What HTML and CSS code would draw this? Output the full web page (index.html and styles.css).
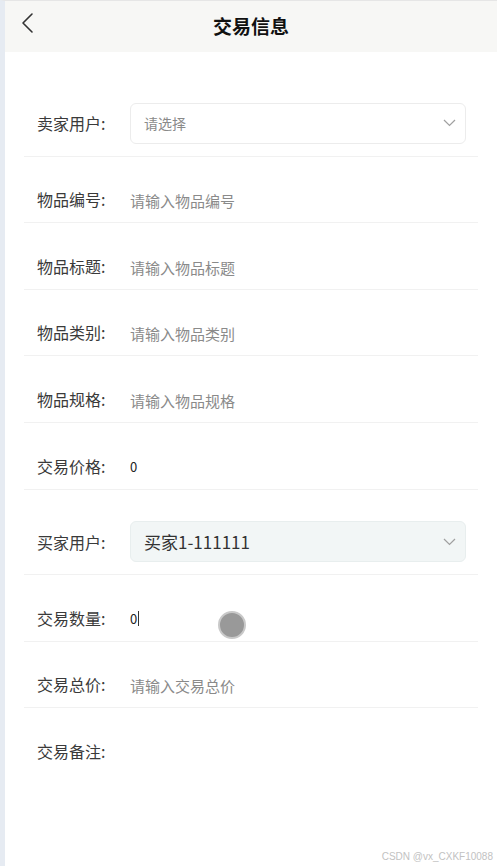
FILE: index.html
```html
<!DOCTYPE html>
<html lang="zh-CN">
<head>
    <meta charset="UTF-8">
    <meta name="viewport" content="width=device-width, initial-scale=1.0">
    <title>交易信息</title>
    <link rel="stylesheet" href="styles.css">
</head>
<body>
    <div class="page">
        <header class="nav-bar">
            <span class="nav-back">
                <svg width="14" height="22" viewBox="0 0 14 22">
                    <path d="M11 2 L2 11 L11 20" fill="none" stroke="#333" stroke-width="1.6" stroke-linecap="round" stroke-linejoin="round"/>
                </svg>
            </span>
            <h1 class="nav-title">交易信息</h1>
            <span class="nav-side"></span>
        </header>

        <form class="form">
            <div class="form-row">
                <label class="form-label">卖家用户:</label>
                <div class="picker">
                    <span class="picker-text placeholder">请选择</span>
                    <svg class="picker-arrow" width="13" height="8" viewBox="0 0 13 8">
                        <path d="M1 1 L6.5 6.5 L12 1" fill="none" stroke="#a0a0a0" stroke-width="1.2"/>
                    </svg>
                </div>
            </div>
            <div class="form-row">
                <label class="form-label">物品编号:</label>
                <span class="form-input placeholder">请输入物品编号</span>
            </div>
            <div class="form-row">
                <label class="form-label">物品标题:</label>
                <span class="form-input placeholder">请输入物品标题</span>
            </div>
            <div class="form-row">
                <label class="form-label">物品类别:</label>
                <span class="form-input placeholder">请输入物品类别</span>
            </div>
            <div class="form-row">
                <label class="form-label">物品规格:</label>
                <span class="form-input placeholder">请输入物品规格</span>
            </div>
            <div class="form-row">
                <label class="form-label">交易价格:</label>
                <span class="form-input value">0</span>
            </div>
            <div class="form-row">
                <label class="form-label">买家用户:</label>
                <div class="picker picker-filled">
                    <span class="picker-text">买家1-111111</span>
                    <svg class="picker-arrow" width="13" height="8" viewBox="0 0 13 8">
                        <path d="M1 1 L6.5 6.5 L12 1" fill="none" stroke="#a0a0a0" stroke-width="1.2"/>
                    </svg>
                </div>
            </div>
            <div class="form-row">
                <label class="form-label">交易数量:</label>
                <span class="form-input value">0<span class="caret"></span></span>
                <span class="touch-dot"></span>
            </div>
            <div class="form-row">
                <label class="form-label">交易总价:</label>
                <span class="form-input placeholder">请输入交易总价</span>
            </div>
            <div class="form-row form-row-last">
                <label class="form-label">交易备注:</label>
            </div>
        </form>

        <span class="watermark">CSDN @vx_CXKF10088</span>
    </div>
</body>
</html>
```

FILE: styles.css
```css
body {
    margin: 0;
    background: #fff;
    color: #333;
    font-family: "Noto Sans CJK SC", "Noto Sans", sans-serif;
}

.page {
    position: relative;
    min-height: 866px;
    box-sizing: border-box;
    border-left: 5px solid #e6ebf2;
    border-top: 1px solid #e6e6e6;
}

.nav-bar {
    display: grid;
    grid-template-columns: 40px 1fr 40px;
    align-items: center;
    height: 51px;
    background: #f7f7f5;
}

.nav-back {
    display: flex;
    padding-left: 16px;
    padding-bottom: 8px;
}

.nav-title {
    margin: 0 0 2px;
    text-align: center;
    font-size: 19px;
    font-weight: bold;
    color: #111;
}

.form {
    margin: 19px 19px 0;
}

.form-row {
    position: relative;
    display: flex;
    align-items: center;
    padding: 31.6px 12px 12px 13px;
    min-height: 22px;
    border-bottom: 1px solid #f1f1f1;
}

.form-row-last {
    border-bottom: none;
}

.form-label {
    flex: 0 0 93px;
    font-size: 16px;
    line-height: 22px;
    color: #3a3a3a;
}

.form-input {
    font-size: 15px;
    line-height: 22px;
    padding-top: 2px;
    box-sizing: border-box;
    height: 22px;
}

.placeholder {
    color: #8a8a8a;
}

.value {
    display: flex;
    align-items: center;
    font-size: 13px;
    color: #222;
}

.caret {
    display: inline-block;
    width: 1px;
    height: 15px;
    margin-left: 1px;
    background: #333;
}

.picker {
    flex: 1;
    display: flex;
    align-items: center;
    justify-content: space-between;
    height: 39px;
    padding: 0 9px 0 13px;
    border: 1px solid #ececec;
    border-radius: 6px;
    background: #fff;
}

.picker-filled {
    background: #f2f6f6;
    border-color: #e8eeee;
}

.picker-text {
    font-size: 14px;
}

.picker-filled .picker-text {
    font-size: 17px;
    color: #333;
}

.touch-dot {
    position: absolute;
    left: 194px;
    top: 36px;
    width: 24px;
    height: 24px;
    border-radius: 50%;
    background: #999;
    border: 2px solid #c9c9c9;
}

.watermark {
    position: absolute;
    right: 4px;
    bottom: 4px;
    font-family: "Liberation Sans", sans-serif;
    font-size: 10px;
    color: #c2c2c2;
}
```
